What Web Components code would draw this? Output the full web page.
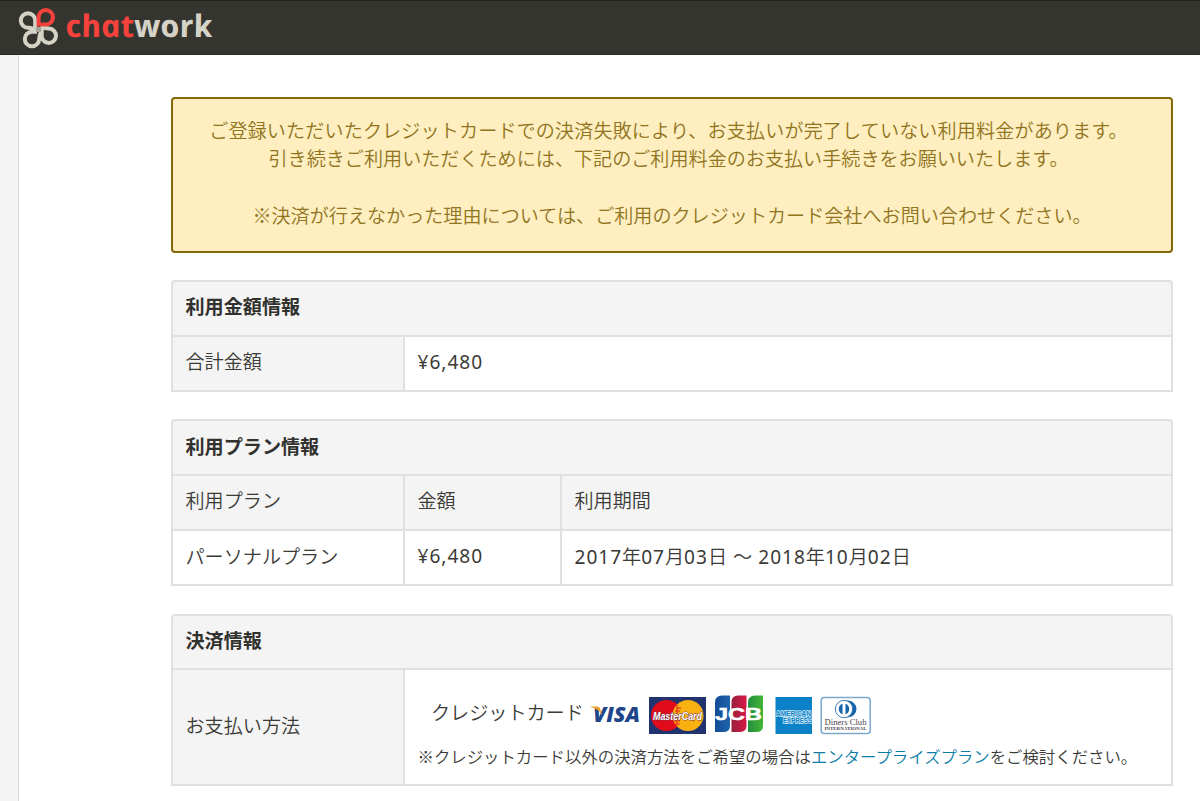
<!DOCTYPE html>
<html lang="ja">
<head>
<meta charset="utf-8">
<title>Chatwork</title>
<style>
body{margin:0;background:#fff;overflow:hidden;height:801px;font:350 19.1px/28px "Noto Sans CJK JP","Noto Sans",sans-serif;color:#3a3a37}
</style>
</head>
<body>
<billing-page></billing-page>
<script>
function define(name, html){
  const t=document.createElement('template');
  t.innerHTML=html;
  customElements.define(name, class extends HTMLElement{
    constructor(){super();this.attachShadow({mode:'open'}).append(t.content.cloneNode(true));}
  });
}

define('site-header', `<style>
:host{display:flex;align-items:flex-start;height:55px;box-sizing:border-box;background:#353530;border-top:1px solid #24241f;border-bottom:1px solid #292925}
svg{display:block}
text{font-family:"Open Sans",sans-serif;font-weight:700;font-style:italic;font-size:31px}
</style>
<svg width="230" height="53" viewBox="0 1 230 53">
  <g fill="none" stroke-width="4" stroke-linejoin="round">
    <path stroke="#d5d2c6" d="M35.200 29.500V20.500A7.200 7.200 0 1 0 28 27.700Q33 27.700 37 31.500"/>
    <path stroke="#d5d2c6" d="M37 31.800H32A7.200 7.200 0 1 0 39.200 39Q39.200 34.500 41.500 31"/>
    <path stroke="#d5d2c6" d="M41.700 28V34.500A7.200 7.200 0 1 0 48.900 28.500Q44 28.500 40.500 26"/>
    <path stroke="#f5423c" d="M37.500 24.500H45.800A7.200 7.200 0 1 0 38.600 17.300V26.500"/>
    <rect x="36" y="27" width="5" height="5" fill="#a5a298"/>
  </g>
  <text transform="translate(67 36.800) skewX(12)" textLength="147" lengthAdjust="spacingAndGlyphs"><tspan fill="#f5423c">chat</tspan><tspan fill="#d5d2c6">work</tspan></text>
</svg>`);

define('notice-box', `<style>
:host{display:block;box-sizing:border-box;height:156px;padding:17px 0 0;border:2px solid #84690f;border-radius:4px;background:#feeec0;color:#907420;text-align:center;line-height:28.200px}
</style><slot></slot>`);

define('info-table', `<style>
:host{display:grid;grid-template-columns:var(--cols);grid-template-rows:var(--rows);gap:2px;padding:2px;background:#e0e0e0;border-radius:4px 4px 0 0;box-sizing:border-box}
</style><slot></slot>`);

define('info-cell', `<style>
:host{display:flex;flex-direction:column;justify-content:center;align-items:flex-start;background:#fff;padding:0 12.500px 3px;min-width:0}
:host([head]){background:#f4f4f4;padding-bottom:5px}
:host([caption]){background:#f4f4f4;grid-column:1/-1;font-weight:700;border-radius:3px 3px 0 0;padding-bottom:4px;color:#31312d}
</style><slot></slot>`);

define('num-text', `<style>
:host{display:inline;font-family:"Noto Sans",sans-serif;font-weight:400;letter-spacing:.98px}
</style><slot></slot>`);

define('card-brands', `<style>:host{display:block}svg{display:block}text{font-weight:700}</style>
<svg width="290" height="44" viewBox="585 692 290 44">
  <defs>
    <linearGradient id="jb"><stop stop-color="#114b94"/><stop offset="1" stop-color="#2065ac"/></linearGradient>
    <linearGradient id="jr"><stop stop-color="#98203e"/><stop offset="1" stop-color="#d71943"/></linearGradient>
    <linearGradient id="jg"><stop stop-color="#238f3e"/><stop offset="1" stop-color="#43b536"/></linearGradient>
    <clipPath id="ax"><rect x="775.500" y="697" width="37" height="37"/></clipPath>
  </defs>
  <text x="593" y="722" font-family="Open Sans" font-size="21.500" font-style="italic" style="font-weight:800" fill="#20458a" textLength="47" lengthAdjust="spacingAndGlyphs">VISA</text>
  <path d="M590.500 706.500H597.500Q600 707 600.500 709.500L602 715Q599 709 590.500 707Z" fill="#eca22e"/>
  <rect x="649" y="697" width="57" height="37" fill="#20336f"/>
  <circle cx="666.500" cy="715.500" r="15.500" fill="#e20b1b"/>
  <circle cx="688" cy="715.500" r="15.500" fill="#f9b112"/>
  <path d="M677 705V726M677 708H681M675 711H680M674 721H680M675 724H680" stroke="#e84b18" stroke-width="1.500"/>
  <text x="653" y="720" font-family="Liberation Sans" font-size="11" font-style="italic" fill="#fff" stroke="#713044" stroke-width="1" paint-order="stroke" textLength="49" lengthAdjust="spacingAndGlyphs">MasterCard</text>
  <path d="M722 695.500H730V726Q730 732 723 732H715V702Q715 696 722 695.500Z" fill="url(#jb)"/>
  <path d="M738 695.500H746.500V726Q746.500 732 739 732H731.500V702Q731.500 696 738 695.500Z" fill="url(#jr)"/>
  <path d="M755 695.500H763V726Q763 732 756 732H748V702Q748 696 755 695.500Z" fill="url(#jg)"/>
  <text x="715" y="720" font-family="Liberation Sans" font-size="16.500" fill="#fff" stroke="#fff" stroke-width=".5" textLength="47" lengthAdjust="spacingAndGlyphs">JCB</text>
  <rect x="775.500" y="697" width="36.500" height="37" fill="#0b82c8"/>
  <g clip-path="url(#ax)" font-family="Liberation Sans" font-size="6.500" fill="#0b82c8" stroke="#d3eaf7" stroke-width="1.300" paint-order="stroke">
    <text x="776" y="716" textLength="35" lengthAdjust="spacingAndGlyphs">AMERICAN</text>
    <text x="783" y="723" textLength="29" lengthAdjust="spacingAndGlyphs">EXPRESS</text>
  </g>
  <rect x="821.200" y="697.400" width="49" height="36" rx="3" fill="#fff" stroke="#7ba8cb" stroke-width="1.500"/>
  <ellipse cx="847.500" cy="709" rx="9" ry="8.500" fill="#1764a8"/>
  <circle cx="844" cy="709" r="8.700" fill="#fff" stroke="#1764a8" stroke-width=".8"/>
  <path d="M842.500 703.800A5.500 5.500 0 0 0 842.500 714.200ZM845.500 703.800A5.500 5.500 0 0 1 845.500 714.200Z" fill="#1764a8"/>
  <text x="824.500" y="724.500" font-family="Liberation Serif" font-size="9" style="font-weight:400" fill="#4a4350" textLength="42" lengthAdjust="spacingAndGlyphs">Diners Club</text>
  <text x="824.500" y="730" font-family="Liberation Serif" font-size="5" fill="#4a4350" textLength="42" lengthAdjust="spacingAndGlyphs">INTERNATIONAL</text>
</svg>`);

define('payment-methods', `<style>
:host{display:block}
.row{display:flex;align-items:center;height:44px;padding:0 0 0 13.500px;white-space:nowrap}
.row span{width:153.500px;margin-bottom:3px}
card-brands{margin-top:2px}
.note{margin-top:7px;font-size:16.400px;line-height:28px;white-space:nowrap}
a{color:#0d7da6;text-decoration:none}
</style>
<div class="row"><span>クレジットカード</span><card-brands></card-brands></div>
<div class="note">※クレジットカード以外の決済方法をご希望の場合は<a href="#">エンタープライズプラン</a>をご検討ください。</div>`);

define('billing-page', `<style>
:host{display:block}
.body{display:flex;height:746px}
.side{width:18px;flex:none;background:#f4f4f4;border-right:1px solid #dcdcdc}
main{flex:1;display:flex;flex-direction:column;padding:42px 27px 0 152px}
info-table{flex:none}
.a{--cols:230px 1fr;--rows:53px 53px;margin-top:27px;height:112px}
.b{--cols:230px 155px 1fr;--rows:53px 53px 53px;margin-top:27px;height:167px}
.c{--cols:230px 1fr;--rows:52px 114px;margin-top:28px;height:172px}
.a info-cell[caption]{padding-bottom:5px}
.pay{padding-bottom:0;padding-top:7px}
info-cell.method{padding-bottom:4px}
.wide{padding-right:7px;letter-spacing:.12px}
.trail{padding-right:7px}
.tilde{margin:0 1.800px}
</style>
<site-header></site-header>
<div class="body"><div class="side"></div>
<main>
  <notice-box><span class="wide">ご登録いただいたクレジットカードでの決済失敗により、お支払いが完了していない利用料金があります。</span><br><span class="trail">引き続きご利用いただくためには、下記のご利用料金のお支払い手続きをお願いいたします。</span><br><br>※決済が行えなかった理由については、ご利用のクレジットカード会社へお問い合わせください。</notice-box>
  <info-table class="a">
    <info-cell caption>利用金額情報</info-cell>
    <info-cell head>合計金額</info-cell><info-cell><num-text>¥6,480</num-text></info-cell>
  </info-table>
  <info-table class="b">
    <info-cell caption>利用プラン情報</info-cell>
    <info-cell head>利用プラン</info-cell><info-cell head>金額</info-cell><info-cell head>利用期間</info-cell>
    <info-cell>パーソナルプラン</info-cell><info-cell><num-text>¥6,480</num-text></info-cell>
    <info-cell><span><num-text>2017</num-text>年<num-text>07</num-text>月<num-text>03</num-text>日 <span class="tilde">～</span> <num-text>2018</num-text>年<num-text>10</num-text>月<num-text>02</num-text>日</span></info-cell>
  </info-table>
  <info-table class="c">
    <info-cell caption>決済情報</info-cell>
    <info-cell head class="method">お支払い方法</info-cell><info-cell class="pay"><payment-methods></payment-methods></info-cell>
  </info-table>
</main></div>`);
</script>
</body>
</html>
